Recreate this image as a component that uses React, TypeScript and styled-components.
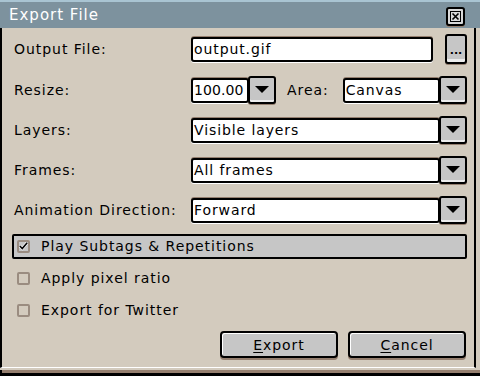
import styled, { createGlobalStyle } from 'styled-components';

const face = '#d3cbbe';
const titleBlue = '#7d929e';
const titleLight = '#a9c4d2';
const buttonFace = '#c6c6c6';
const shadow = '#957f6f';

const GlobalStyle = createGlobalStyle`
  html, body {
    margin: 0;
    padding: 0;
    background: ${face};
  }
  * {
    box-sizing: border-box;
  }
`;

const Window = styled.div`
  width: 480px;
  height: 376px;
  display: flex;
  flex-direction: column;
  background: ${face};
  border-bottom: 3px solid #000;
  font-family: 'DejaVu Sans', 'Noto Sans', sans-serif;
  font-size: 14px;
  letter-spacing: 0.95px;
  color: #000;
  overflow: hidden;
`;

const TitleBar = styled.div`
  height: 28px;
  flex: 0 0 28px;
  display: flex;
  align-items: center;
  justify-content: space-between;
  padding: 0 14px 0 9px;
  background: ${titleBlue};
  border-top: 2px solid ${titleLight};
  color: #fff;
  font-size: 15px;
  letter-spacing: 1px;
`;

const CloseButton = styled.div`
  width: 19px;
  height: 19px;
  display: flex;
  align-items: center;
  justify-content: center;
  background: #d9d9d9;
  border: 2px solid #000;
  border-radius: 3px;
  box-shadow: 0 1px 0 ${shadow};
  margin-top: 2px;
  margin-right: 1px;
`;

const Body = styled.div`
  flex: 1;
  display: flex;
  flex-direction: column;
  margin-right: 4px;
  padding: 0 7px 0 10px;
  border-left: 2px solid #000;
  border-right: 2px solid #000;
  border-bottom: 1px solid #fff;
`;

const BottomEdge = styled.div`
  flex: 0 0 3px;
  margin-top: 2px;
  background: ${shadow};
  border-left: 2px solid #000;
`;

const Row = styled.div<{ $height?: number }>`
  height: ${({ $height }) => $height ?? 40}px;
  flex: 0 0 ${({ $height }) => $height ?? 40}px;
  display: flex;
  align-items: center;
`;

const Label = styled.div`
  width: 179px;
  flex: 0 0 179px;
  padding-left: 2px;
  white-space: nowrap;
`;

const InlineLabel = styled.div`
  padding: 0 14px 0 11px;
`;

const Controls = styled.div`
  flex: 1;
  display: flex;
  align-items: center;
`;

const Field = styled.div<{ $width?: number }>`
  height: 25px;
  flex: ${({ $width }) => ($width ? `0 0 ${$width}px` : '1')};
  display: flex;
  align-items: center;
  padding-left: 1px;
  background: #fff;
  border: 2px solid #000;
  border-radius: 3px;
  box-shadow: 0 -1px 0 ${shadow}, 0 1px 0 #fff;
  letter-spacing: ${({ $width }) => ($width ? '0.1px' : '0.9px')};
  white-space: nowrap;
  overflow: hidden;
`;

const DropButton = styled.div`
  width: 28px;
  height: 28px;
  flex: 0 0 28px;
  margin-left: -1px;
  display: flex;
  align-items: center;
  justify-content: center;
  background: ${buttonFace};
  border: 2px solid #000;
  border-radius: 3px;
  box-shadow: inset 0 -2px 0 #ececec, 0 1px 0 ${shadow};
`;

const BrowseButton = styled.div`
  width: 22px;
  height: 30px;
  flex: 0 0 22px;
  margin-left: 12px;
  display: flex;
  align-items: flex-end;
  justify-content: center;
  padding-bottom: 6px;
  background: ${buttonFace};
  border: 2px solid #000;
  border-radius: 3px;
  box-shadow: inset 0 -3px 0 #ececec, 0 1px 0 ${shadow};
  font-size: 11px;
  font-weight: bold;
  letter-spacing: 0;
  line-height: 1;
`;

const CheckRow = styled.div<{ $focused?: boolean }>`
  height: 25px;
  flex: 1;
  display: flex;
  align-items: center;
  gap: 11px;
  padding-left: 3px;
  background: ${({ $focused }) => ($focused ? buttonFace : 'transparent')};
  border: 2px solid ${({ $focused }) => ($focused ? '#000' : 'transparent')};
  border-radius: 2px;
`;

const Box = styled.div`
  width: 13px;
  height: 13px;
  flex: 0 0 13px;
  display: flex;
  align-items: center;
  justify-content: center;
  border: 2px solid #9a8c80;
  border-radius: 2px;
`;

const ButtonBar = styled.div`
  flex: 1;
  display: flex;
  justify-content: flex-end;
  align-items: flex-start;
  gap: 10px;
  padding-top: 5px;
  padding-right: 1px;
`;

const PushButton = styled.div`
  width: 118px;
  height: 27px;
  display: flex;
  align-items: center;
  justify-content: center;
  background: ${buttonFace};
  border: 2px solid #000;
  border-radius: 4px;
  box-shadow: inset 1px 1px 0 #fff, 0 2px 0 ${shadow};
`;

const Mnemonic = styled.span`
  text-decoration: underline;
  text-underline-offset: 2px;
`;

const Arrow = () => (
  <svg width="14" height="8" viewBox="0 0 14 8">
    <polygon points="0,0 14,0 7,7" fill="#000" />
  </svg>
);

const CloseIcon = () => (
  <svg width="11" height="11" viewBox="0 0 11 11">
    <rect x="0.5" y="0.5" width="10" height="10" fill="none" stroke="#000" />
    <path d="M2.5 2.5 L8.5 8.5 M8.5 2.5 L2.5 8.5" stroke="#000" strokeWidth="1.6" />
  </svg>
);

const CheckMark = () => (
  <svg width="11" height="10" viewBox="0 0 11 10">
    <path d="M1 5 L4 8 L10 1" fill="none" stroke="#fff" strokeWidth="3.5" />
    <path d="M1 5 L4 8 L10 1" fill="none" stroke="#000" strokeWidth="2" />
  </svg>
);

const Combo = ({ value, width }: { value: string; width?: number }) => (
  <>
    <Field $width={width}>{value}</Field>
    <DropButton>
      <Arrow />
    </DropButton>
  </>
);

const checks = [
  { text: 'Play Subtags & Repetitions', checked: true },
  { text: 'Apply pixel ratio', checked: false },
  { text: 'Export for Twitter', checked: false },
];

export default function App() {
  return (
    <>
      <GlobalStyle />
      <Window>
        <TitleBar>
          <span>Export File</span>
          <CloseButton>
            <CloseIcon />
          </CloseButton>
        </TitleBar>
        <Body>
          <Row $height={42}>
            <Label>Output File:</Label>
            <Controls>
              <Field>output.gif</Field>
              <BrowseButton>...</BrowseButton>
            </Controls>
          </Row>
          <Row>
            <Label>Resize:</Label>
            <Controls>
              <Combo value="100.00" width={58} />
              <InlineLabel>Area:</InlineLabel>
              <Combo value="Canvas" />
            </Controls>
          </Row>
          <Row>
            <Label>Layers:</Label>
            <Controls>
              <Combo value="Visible layers" />
            </Controls>
          </Row>
          <Row>
            <Label>Frames:</Label>
            <Controls>
              <Combo value="All frames" />
            </Controls>
          </Row>
          <Row>
            <Label>Animation Direction:</Label>
            <Controls>
              <Combo value="Forward" />
            </Controls>
          </Row>
          {checks.map((c) => (
            <Row key={c.text} $height={32}>
              <CheckRow $focused={c.checked}>
                <Box>{c.checked && <CheckMark />}</Box>
                <span>{c.text}</span>
              </CheckRow>
            </Row>
          ))}
          <ButtonBar>
            <PushButton>
              <span>
                <Mnemonic>E</Mnemonic>xport
              </span>
            </PushButton>
            <PushButton>
              <span>
                <Mnemonic>C</Mnemonic>ancel
              </span>
            </PushButton>
          </ButtonBar>
        </Body>
        <BottomEdge />
      </Window>
    </>
  );
}
